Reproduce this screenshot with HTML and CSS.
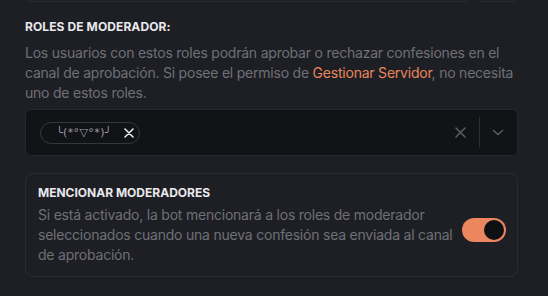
FILE: index.html
```html
<!DOCTYPE html>
<html lang="es">
<head>
<meta charset="utf-8">
<link rel="stylesheet" href="styles.css">
</head>
<body>
<div class="page">
  <div class="prev-row">
    <div class="prev-input"></div>
    <div class="prev-btn"></div>
  </div>

  <h3 class="label">ROLES DE MODERADOR:</h3>
  <p class="help">Los usuarios con estos roles podrán aprobar o rechazar confesiones en el canal de aprobación. Si posee el permiso de <span class="link">Gestionar Servidor</span>, no necesita uno de estos roles.</p>

  <div class="select">
    <div class="values">
      <span class="chip">
        <span class="chip-text">╰(*°▽°*)╯</span>
        <svg class="chip-x" width="10" height="10" viewBox="0 0 10 10"><path d="M1 1 L9 9 M9 1 L1 9" stroke="#f2f2f3" stroke-width="1.5" stroke-linecap="round"/></svg>
      </span>
    </div>
    <div class="indicators">
      <svg class="clear" width="11" height="11" viewBox="0 0 11 11"><path d="M1 1 L10 10 M10 1 L1 10" stroke="#5b5c62" stroke-width="1.5" stroke-linecap="round"/></svg>
      <span class="sep"></span>
      <svg class="chev" width="12" height="7" viewBox="0 0 12 7"><path d="M1.5 1.5 L6 5.5 L10.5 1.5" fill="none" stroke="#5b5c62" stroke-width="1.5" stroke-linecap="round" stroke-linejoin="round"/></svg>
    </div>
  </div>

  <div class="card">
    <div class="card-text">
      <h4 class="card-title">MENCIONAR MODERADORES</h4>
      <p class="card-desc">Si está activado, la bot mencionará a los roles de moderador seleccionados cuando una nueva confesión sea enviada al canal de aprobación.</p>
    </div>
    <span class="toggle on"><span class="knob"></span></span>
  </div>
</div>
</body>
</html>
```

FILE: styles.css
```css
* { box-sizing: border-box; }

html, body {
  margin: 0;
  background: #1e1f24;
}

body {
  font-family: Inter, "Noto Sans", sans-serif;
  color: #74757b;
  overflow: hidden;
}

.page {
  padding: 0 30px 0 25px;
}

.prev-row {
  display: flex;
  gap: 8px;
  margin-top: -34px;
  height: 36px;
}

.prev-input {
  flex: 1;
  border: 1px solid #2b2c31;
  border-radius: 5px;
  background: #1e1f24;
}

.prev-btn {
  width: 40px;
  border: 1px solid #2b2c31;
  border-radius: 5px;
  background: #1e1f24;
}

.label {
  margin: 17px 0 8px;
  font-size: 12px;
  line-height: 16px;
  font-weight: 700;
  color: #e9e9ec;
  letter-spacing: 0.1px;
}

.help {
  margin: 0 0 6px;
  font-size: 14px;
  line-height: 20px;
  letter-spacing: -0.22px;
  color: #6f7076;
}

.link {
  color: #ea855c;
}

.select {
  display: flex;
  align-items: center;
  height: 47px;
  background: #121317;
  border: 1px solid #26272c;
  border-radius: 6px;
  padding: 0 0 0 14px;
}

.values {
  flex: 1;
  display: flex;
  align-items: center;
}

.chip {
  display: inline-flex;
  align-items: center;
  height: 22px;
  border: 1px solid #36373c;
  border-radius: 11px;
  padding: 0 5px 0 15px;
  gap: 12px;
}

.chip-text {
  font-family: "DejaVu Sans", sans-serif;
  font-size: 11px;
  line-height: 14px;
  color: #9c9da2;
  letter-spacing: 0.4px;
}

.chip-x {
  display: block;
}

.indicators {
  display: flex;
  align-items: center;
  height: 100%;
}

.clear {
  display: block;
  margin-right: 13px;
}

.sep {
  width: 1px;
  height: 31px;
  background: #2c2d32;
}

.chev {
  display: block;
  margin: 0 13px 0 12px;
}

.card {
  margin-top: 17px;
  display: flex;
  align-items: center;
  gap: 6px;
  border: 1px solid #2b2c31;
  border-radius: 8px;
  padding: 11px 11px 11px 12px;
}

.card-text {
  flex: 1;
}

.card-title {
  margin: 0 0 4px;
  font-size: 12px;
  line-height: 16px;
  font-weight: 700;
  color: #e9e9ec;
}

.card-desc {
  margin: 0;
  font-size: 14px;
  line-height: 20px;
  letter-spacing: -0.22px;
  color: #6f7076;
}

.toggle {
  position: relative;
  flex: none;
  width: 44px;
  height: 24px;
  border-radius: 12px;
  background: #3a3b40;
  margin-top: 10px;
}

.toggle.on {
  background: #ec865f;
}

.knob {
  position: absolute;
  top: 2px;
  right: 2px;
  width: 20px;
  height: 20px;
  border-radius: 50%;
  background: #0f1014;
}
```
